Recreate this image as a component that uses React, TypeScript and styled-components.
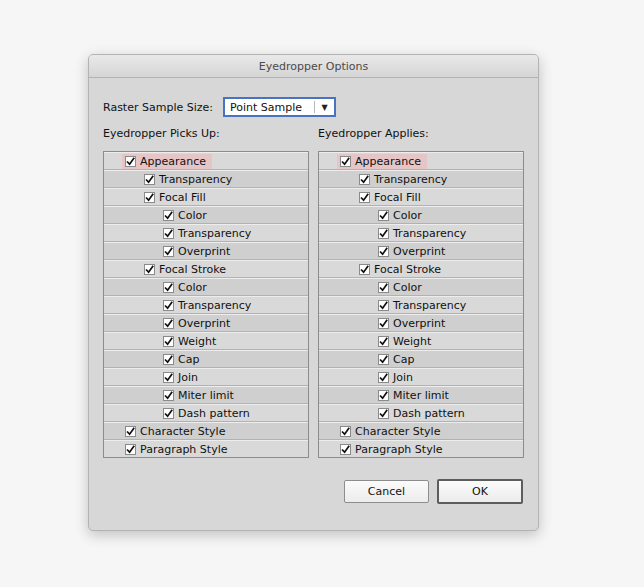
import React from "react";
import styled, { createGlobalStyle } from "styled-components";

const Global = createGlobalStyle`
  html, body { margin: 0; padding: 0; background: #f6f6f6; }
  body { font-family: "DejaVu Sans", "Liberation Sans", sans-serif; }
`;

const Page = styled.div`
  width: 644px;
  height: 587px;
  padding: 54px 0 0 88px;
  box-sizing: border-box;
`;

const Dialog = styled.div`
  width: 451px;
  height: 477px;
  box-sizing: border-box;
  background: #d7d7d7;
  border: 1px solid #b3b3b3;
  border-radius: 5px;
  box-shadow: 0 4px 14px rgba(0, 0, 0, 0.22);
  display: flex;
  flex-direction: column;
  overflow: hidden;
`;

const TitleBar = styled.div`
  height: 22px;
  flex: none;
  background: linear-gradient(#e9e9e9, #d5d5d5);
  border-bottom: 1px solid #b2b2b2;
  display: flex;
  align-items: center;
  justify-content: center;
  font-size: 11px;
  color: #4a4a4a;
`;

const Body = styled.div`
  padding: 19px 15px 0 14px;
  display: flex;
  flex-direction: column;
  font-size: 11px;
  color: #111;
`;

const SizeRow = styled.div`
  display: flex;
  align-items: center;
  gap: 10px;
  height: 20px;
`;

const Select = styled.div`
  width: 113px;
  height: 20px;
  box-sizing: border-box;
  background: #fff;
  border: 2px solid #4a72c2;
  display: flex;
  align-items: center;
  padding-left: 5px;
`;

const SelectText = styled.span`
  flex: 1;
`;

const SelectArrow = styled.span`
  width: 19px;
  height: 12px;
  border-left: 1px solid #b8b8b8;
  display: flex;
  align-items: center;
  justify-content: center;
  font-size: 8px;
  color: #222;
`;

const Columns = styled.div`
  display: grid;
  grid-template-columns: 206px 206px;
  column-gap: 9px;
  margin-top: 10px;
`;

const Column = styled.div`
  display: flex;
  flex-direction: column;
`;

const ColLabel = styled.div`
  height: 14px;
  line-height: 14px;
  margin-bottom: 10px;
`;

const List = styled.div`
  border: 1px solid #8c8c8c;
  background: #d4d4d4;
  display: flex;
  flex-direction: column;
`;

const Row = styled.div<{ $level: number; $alt: boolean }>`
  height: 18px;
  box-sizing: border-box;
  border-top: 1px solid #ededed;
  border-bottom: 1px solid #b2b2b2;
  background: ${(p) => (p.$alt ? "#cfcfcf" : "#d9d9d9")};
  display: flex;
  align-items: center;
  padding-left: ${(p) => 18 + p.$level * 19}px;
  &:last-child {
    border-bottom: none;
    height: 17px;
  }
`;

const Item = styled.div<{ $hi?: boolean }>`
  display: flex;
  align-items: center;
  gap: 4px;
  height: 15px;
  padding: 0 6px 0 3px;
  background: ${(p) => (p.$hi ? "#e6c5c7" : "transparent")};
`;

const Box = styled.span`
  width: 11px;
  height: 11px;
  box-sizing: border-box;
  background: #fff;
  border: 1px solid #8a8a8a;
  display: flex;
  align-items: center;
  justify-content: center;
`;

const Footer = styled.div`
  display: flex;
  justify-content: flex-end;
  gap: 8px;
  margin-top: 21px;
`;

const Button = styled.button<{ $default?: boolean }>`
  font-family: inherit;
  font-size: 11px;
  color: #111;
  width: ${(p) => (p.$default ? "86px" : "85px")};
  height: ${(p) => (p.$default ? "25px" : "23px")};
  margin-top: ${(p) => (p.$default ? "0" : "1px")};
  box-sizing: border-box;
  border: ${(p) => (p.$default ? "2px solid #5d5d5d" : "1px solid #8d8d8d")};
  background: linear-gradient(#fbfbfb, #ececec);
  border-radius: 2px;
  padding: 0;
`;

const Check = () => (
  <Box>
    <svg width="9" height="9" viewBox="0 0 9 9">
      <path d="M1 4.5 L3.6 7.2 L8.2 0.8" fill="none" stroke="#111" strokeWidth="1.7" />
    </svg>
  </Box>
);

const items: [string, number][] = [
  ["Appearance", 0],
  ["Transparency", 1],
  ["Focal Fill", 1],
  ["Color", 2],
  ["Transparency", 2],
  ["Overprint", 2],
  ["Focal Stroke", 1],
  ["Color", 2],
  ["Transparency", 2],
  ["Overprint", 2],
  ["Weight", 2],
  ["Cap", 2],
  ["Join", 2],
  ["Miter limit", 2],
  ["Dash pattern", 2],
  ["Character Style", 0],
  ["Paragraph Style", 0],
];

const CheckList = () => (
  <List>
    {items.map(([label, level], i) => (
      <Row key={i} $level={level} $alt={i % 2 === 1}>
        <Item $hi={i === 0}>
          <Check />
          <span>{label}</span>
        </Item>
      </Row>
    ))}
  </List>
);

export default function App() {
  return (
    <>
      <Global />
      <Page>
        <Dialog>
          <TitleBar>Eyedropper Options</TitleBar>
          <Body>
            <SizeRow>
              <span>Raster Sample Size:</span>
              <Select>
                <SelectText>Point Sample</SelectText>
                <SelectArrow>▼</SelectArrow>
              </Select>
            </SizeRow>
            <Columns>
              <Column>
                <ColLabel>Eyedropper Picks Up:</ColLabel>
                <CheckList />
              </Column>
              <Column>
                <ColLabel>Eyedropper Applies:</ColLabel>
                <CheckList />
              </Column>
            </Columns>
            <Footer>
              <Button>Cancel</Button>
              <Button $default>OK</Button>
            </Footer>
          </Body>
        </Dialog>
      </Page>
    </>
  );
}
